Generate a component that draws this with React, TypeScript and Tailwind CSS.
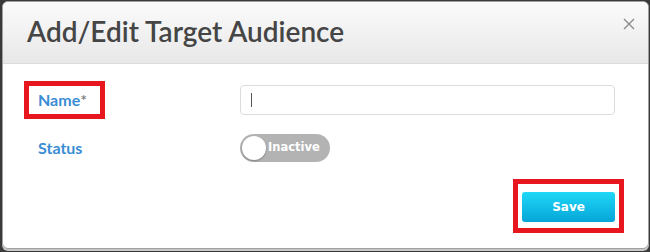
import React from 'react';

export default function App() {
  return (
    <div className="w-[650px] h-[252px] bg-[#3a3a3a] pl-[2px] pr-[1px] pt-[1px] pb-[3px] overflow-hidden">
      <div className="h-full rounded-[6px] border border-[#a0a0a0] bg-white overflow-hidden flex flex-col shadow-[0_2px_0_#c8c8c8]">
        {/* header */}
        <div className="h-[62px] shrink-0 flex justify-between items-start pl-[24px] pr-[13px] pt-[13px] bg-gradient-to-b from-[#fbfbfb] to-[#e8e8e8] border-b border-[#dcdcdc]">
          <h1 className="text-[28px] leading-[1.2] font-semibold text-[#454545] font-['Lato',sans-serif]">Add/Edit Target Audience</h1>
          <button className="mt-[3px] text-[#8a8a8a]">
            <svg width="12" height="12" viewBox="0 0 12 12">
              <path d="M1 1 L11 11 M11 1 L1 11" stroke="currentColor" strokeWidth="1.4" />
            </svg>
          </button>
        </div>

        {/* body */}
        <div className="flex-1 pl-[21px] pr-[33px] pt-[17px] font-['Lato',sans-serif]">
          <div className="flex items-center">
            <div className="w-[216px] shrink-0">
              <span className="inline-flex items-center h-[38px] border-[5px] border-[#e8161e] pl-[9px] pr-[13px] text-[16px] font-bold text-[#3a8dd4]">
                Name<span className="text-[#666] font-normal">*</span>
              </span>
            </div>
            <div className="flex-1 h-[30px] rounded-[4px] border border-[#dcdcdc] flex items-center pl-[10px]">
              <div className="w-px h-[14px] bg-[#555]" />
            </div>
          </div>

          <div className="flex items-center mt-[15px]">
            <div className="w-[216px] shrink-0 pl-[14px] text-[16px] font-bold text-[#3a8dd4]">Status</div>
            <div className="w-[90px] h-[28px] rounded-full bg-[#b3b3b3] flex items-center pl-[2px] gap-[2px]">
              <div className="w-[24px] h-[24px] rounded-full bg-white shadow-[0_1px_2px_rgba(0,0,0,0.3)]" />
              <span className="text-[11.5px] font-bold text-white font-['DejaVu_Sans',sans-serif]">Inactive</span>
            </div>
          </div>

          <div className="flex justify-end mt-[17px] -mr-[9px]">
            <div className="border-[5px] border-[#e8161e] pt-[8px] pb-[6px] px-[4px]">
              <button className="w-[93px] h-[30px] rounded-[3px] bg-gradient-to-b from-[#20d8f7] to-[#05a5d8] text-white text-[12px] font-bold font-['DejaVu_Sans',sans-serif]">
                Save
              </button>
            </div>
          </div>
        </div>
      </div>
    </div>
  );
}
